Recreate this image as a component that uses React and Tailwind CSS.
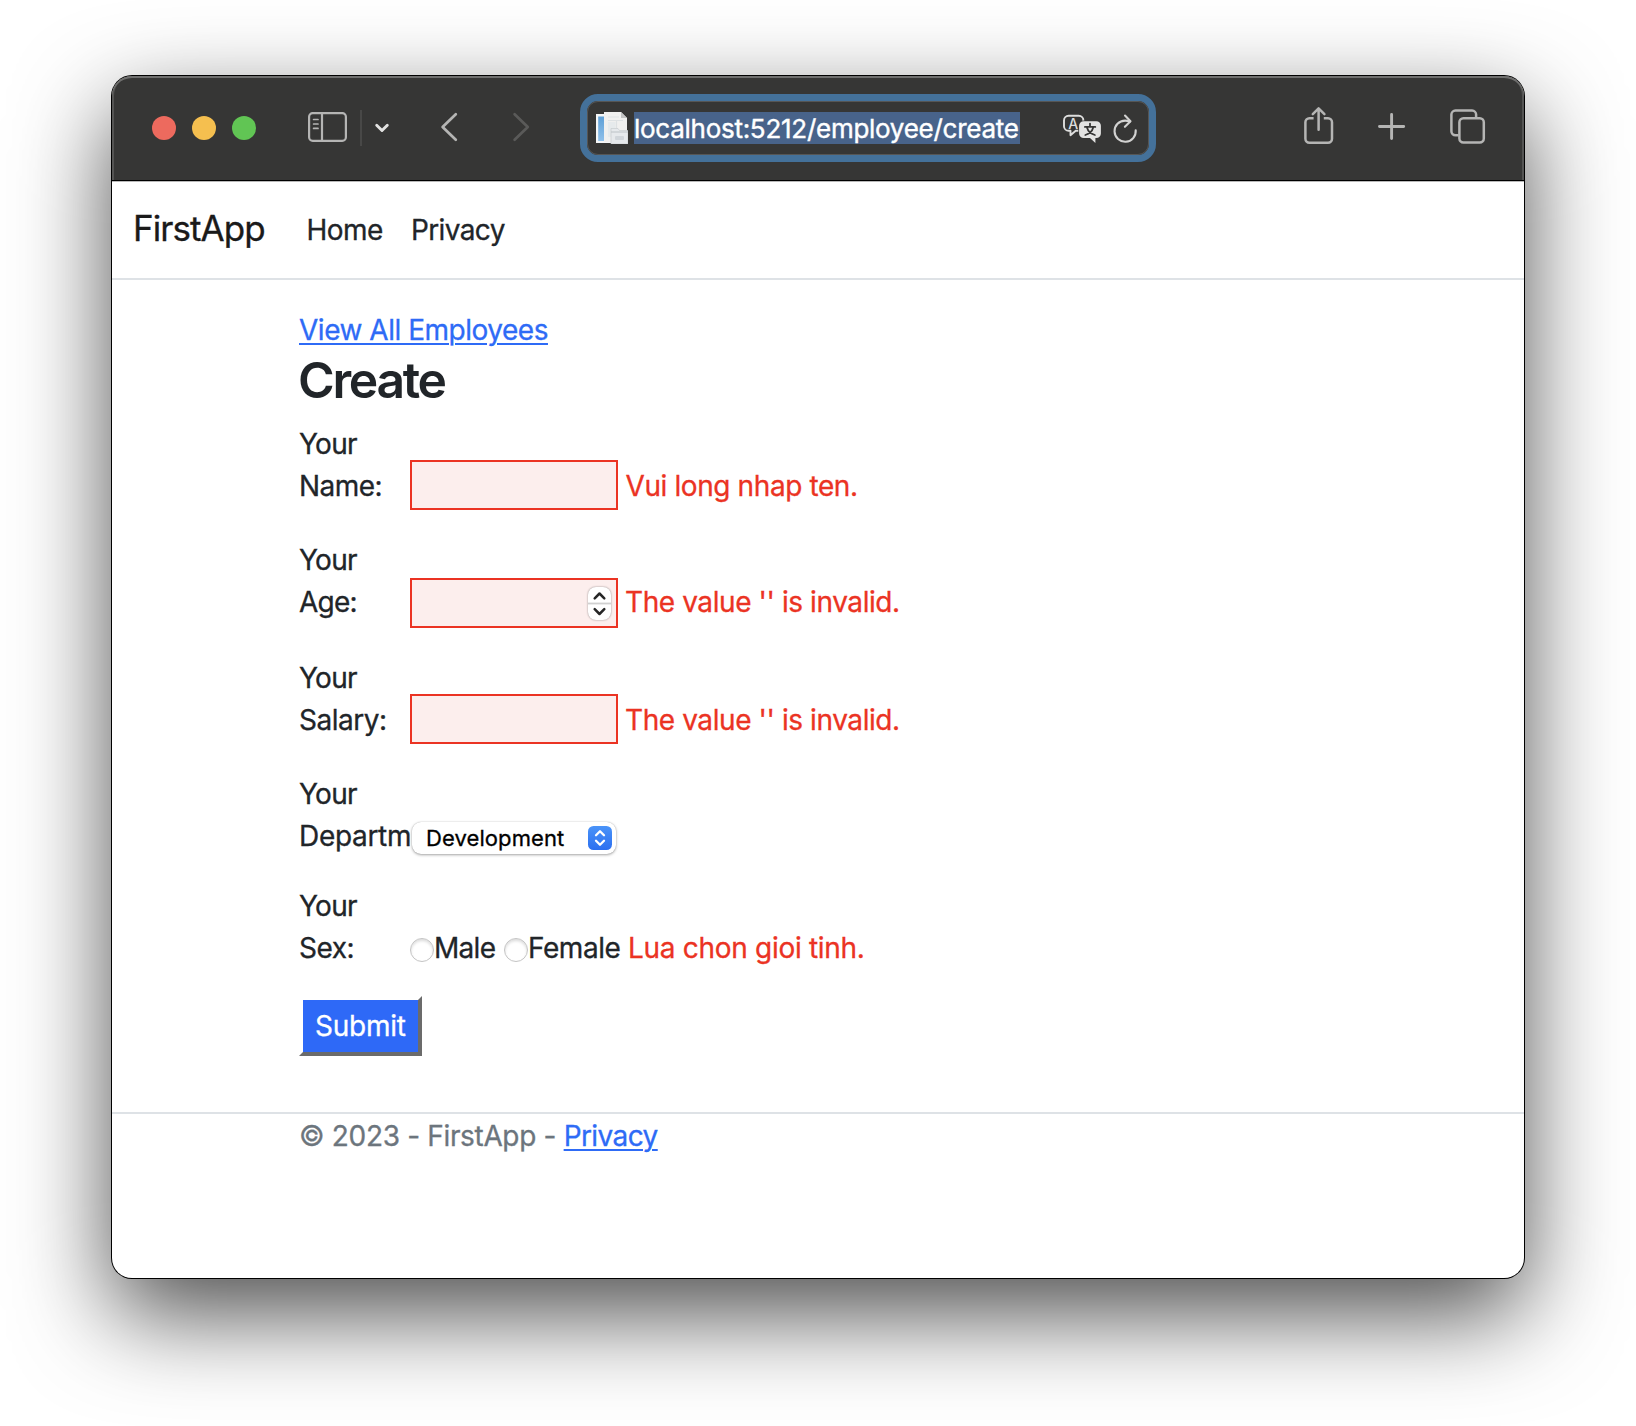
function SidebarIcon() {
  return (
    <svg className="ml-[50px] h-[52px] w-[44px]" viewBox="306 102 44 52" fill="none" stroke="#b5b5b4" strokeLinecap="round">
      <rect x="309.1" y="113.1" width="36.8" height="27.8" rx="3.6" strokeWidth="2.2" />
      <path d="M322 113v28" strokeWidth="2.2" strokeLinecap="butt" />
      <path d="M313.6 119.5h4.4M313.6 124h4.4M313.6 128.4h4.4" strokeWidth="1.7" />
    </svg>
  );
}

function ChevronDownIcon() {
  return (
    <svg className="ml-[10px] h-[52px] w-[20px]" viewBox="372 102 20 52" fill="none" stroke="#e2e2e1" strokeWidth="2.9" strokeLinecap="round" strokeLinejoin="round">
      <path d="M376.7 125.2l5.3 5.3 5.3-5.3" />
    </svg>
  );
}

function BackIcon() {
  return (
    <svg className="ml-[46px] h-[52px] w-[22px]" viewBox="438 102 22 52" fill="none" stroke="#b5b5b4" strokeWidth="2.7" strokeLinecap="round" strokeLinejoin="round">
      <path d="M455.8 114.2L442.6 127l13.2 12.8" />
    </svg>
  );
}

function ForwardIcon() {
  return (
    <svg className="ml-[50px] h-[52px] w-[22px]" viewBox="510 102 22 52" fill="none" stroke="#5a5a59" strokeWidth="2.7" strokeLinecap="round" strokeLinejoin="round">
      <path d="M514.6 114.2L527.8 127l-13.2 12.8" />
    </svg>
  );
}

function ShareIcon() {
  return (
    <svg className="ml-[144px] h-[52px] w-[37px]" viewBox="1300 102 37 52" fill="none" stroke="#b5b5b4" strokeWidth="2.5" strokeLinecap="round" strokeLinejoin="round">
      <path d="M1313.6 118.3h-4.2a4 4 0 0 0-4 4v16.5a4 4 0 0 0 4 4h18.6a4 4 0 0 0 4-4v-16.5a4 4 0 0 0-4-4h-4.2" strokeLinecap="butt" />
      <path d="M1318.6 129.7v-21M1312.8 114.2l5.8-5.8 5.8 5.8" />
    </svg>
  );
}

function PlusIcon() {
  return (
    <svg className="ml-[37px] h-[52px] w-[35px]" viewBox="1374 102 35 52" fill="none" stroke="#b5b5b4" strokeWidth="2.9" strokeLinecap="round">
      <path d="M1379.5 126.5h24.2M1391.6 114.4v24.2" />
    </svg>
  );
}

function TabsIcon() {
  return (
    <svg className="ml-[37px] h-[52px] w-[43px]" viewBox="1446 102 43 52" fill="none" stroke="#b5b5b4" strokeWidth="2.5">
      <path d="M1458.5 135.3h-3.1a4 4 0 0 1-4-4v-16.7a4 4 0 0 1 4-4h16.7a4 4 0 0 1 4 4v3.2" />
      <rect x="1459.4" y="118.2" width="24.4" height="24.4" rx="4" />
    </svg>
  );
}

function PagesIcon() {
  return (
    <svg className="ml-[6px] h-8 w-8" viewBox="0 0 32 32">
      <defs>
        <linearGradient id="pageBlue" x1="0" y1="0" x2="0" y2="1">
          <stop offset="0" stopColor="#5d9fd6" />
          <stop offset="1" stopColor="#8fc0ea" />
        </linearGradient>
      </defs>
      <rect x="0" y="2" width="16" height="29" fill="#f4f6f7" />
      <rect x="2.2" y="4.5" width="8" height="24.5" fill="url(#pageBlue)" />
      <path d="M8 0h17l6 6v24H8z" fill="#f0f0ef" />
      <path d="M25 0v6h6z" fill="#c3c4c4" />
      <path d="M12 5h11M12 8.5h15M20.5 8.5v8M12 17h8" stroke="#dde1e3" strokeWidth="1.2" fill="none" />
      <rect x="12" y="10" width="7.5" height="15" fill="#e6eaec" />
      <path d="M15 16.5h7l1.5 2H32V32H15z" fill="#e6e9ec" stroke="#c2c7cb" strokeWidth="0.6" />
      <path d="M15 20h17" stroke="#bcc2c6" strokeWidth="1" />
      <rect x="19" y="24" width="9" height="4" rx="1" fill="#d0d5da" />
    </svg>
  );
}

function TranslateIcon() {
  return (
    <svg className="mt-[1px] ml-[41px] h-8 w-[42px]" viewBox="1061 113 42 32">
      <path
        d="M1079 130.8h-3.3l-5.2 4.4v-4.4h-1.9a4.6 4.6 0 0 1-4.6-4.6v-5.8a4.6 4.6 0 0 1 4.6-4.6h10.2a4.6 4.6 0 0 1 4.6 4.6v1"
        fill="none"
        stroke="#dededd"
        strokeWidth="1.9"
        strokeLinejoin="round"
      />
      <text x="1073.3" y="128.6" textAnchor="middle" fontSize="14" fontWeight="500" fill="#dededd">A</text>
      <path
        d="M1083.7 121.2h12.6a4.6 4.6 0 0 1 4.6 4.6v7.6a4.6 4.6 0 0 1-4.6 4.6h-.9v5l-5.4-5h-6.3a4.6 4.6 0 0 1-4.6-4.6v-7.6a4.6 4.6 0 0 1 4.6-4.6z"
        fill="#e3e3e2"
        stroke="#363635"
        strokeWidth="1.6"
        paintOrder="stroke"
      />
      <path d="M1090 123.6v2.8M1084.9 126.9h10.4M1087 127.6c.9 3.4 3.6 6.2 7.9 7.4M1093.2 127.6c-.9 3.4-3.6 6.2-7.9 7.4" fill="none" stroke="#363635" strokeWidth="1.8" strokeLinecap="round" />
    </svg>
  );
}

function ReloadIcon() {
  return (
    <svg className="mt-[1px] ml-[9px] h-8 w-[28px]" viewBox="1112 113 28 32" fill="none" stroke="#d2d2d1" strokeWidth="2.1" strokeLinecap="round" strokeLinejoin="round">
      <path d="M1135.7 130.2a10.6 10.6 0 1 1-10.6-9.6c1.7 0 3.2.3 4.7.9" />
      <path d="M1125 115.5l5.5 5.7-5.6 5.6" />
    </svg>
  );
}

function Toolbar() {
  return (
    <div className="flex h-[104px] shrink-0 items-center rounded-t-[20px] bg-[#363635] shadow-[inset_0_2px_0_#6f6f6e,inset_2px_0_0_#545453,inset_-2px_0_0_#545453]">
      <div className="ml-[40px] flex gap-4">
        <span className="size-6 rounded-full bg-[#ed6a5e]" />
        <span className="size-6 rounded-full bg-[#f5bf4f]" />
        <span className="size-6 rounded-full bg-[#61c554]" />
      </div>
      <SidebarIcon />
      <span className="ml-[10px] h-9 w-[2px] bg-[#484847]" />
      <ChevronDownIcon />
      <BackIcon />
      <ForwardIcon />
      <div className="ml-[48px] flex h-[68px] w-[576px] items-center rounded-[18px] border-[7px] border-[#44719a] bg-[#363635]">
        <div className="flex h-full w-full items-center rounded-[11px] border border-[#565655] pl-[2px]">
          <PagesIcon />
          <span className="ml-[6px] h-8 w-[386px] shrink-0 bg-[#48638a] text-[26px] leading-[34px] tracking-[-0.27px] whitespace-nowrap text-white [-webkit-text-stroke:0.4px_#fff]">
            localhost:5212/employee/create
          </span>
          <TranslateIcon />
          <ReloadIcon />
        </div>
      </div>
      <ShareIcon />
      <PlusIcon />
      <TabsIcon />
    </div>
  );
}

function Stepper() {
  return (
    <span className="block h-[33px] w-[23px] rounded-[8px] bg-white shadow-[0_0_2px_rgba(0,0,0,0.45)]">
      <svg className="h-[33px] w-[23px]" viewBox="0 0 23 33" fill="none" stroke="#262626" strokeWidth="2.5" strokeLinecap="round" strokeLinejoin="round">
        <path d="M0 16.5h23" stroke="#d0d0d0" strokeWidth="1.8" strokeLinecap="butt" />
        <path d="M6.7 11.3l4.8-4.8 4.8 4.8M6.7 22.2l4.8 4.8 4.8-4.8" />
      </svg>
    </span>
  );
}

function Label({ second, spacing }) {
  return (
    <div className="w-[111px] shrink-0 whitespace-nowrap">
      <div className="tracking-[-0.75px]">Your</div>
      <div className={spacing}>{second}</div>
    </div>
  );
}

function Field({ children, offset }) {
  return (
    <div className={`flex h-[50px] w-[208px] items-center justify-end border-2 border-[#eb3323] bg-[#fceeed] pr-[5px] ${offset}`}>
      {children}
    </div>
  );
}

function ErrorText({ children, className }) {
  return <span className={`mt-[42px] whitespace-nowrap text-[#eb3323] ${className}`}>{children}</span>;
}

function Radio() {
  return (
    <span className="mt-[53px] block size-6 shrink-0 rounded-full border border-[#c4c4c4] bg-white shadow-[inset_0_2px_3px_rgba(0,0,0,0.14)]" />
  );
}

function DepartmentSelect() {
  return (
    <div className="mt-[49px] ml-[2px] flex h-8 w-[204px] items-center justify-between rounded-[9px] bg-white pr-1 pl-[14px] shadow-[0_0_1px_rgba(0,0,0,0.25),0_1px_3px_rgba(0,0,0,0.35)]">
      <span className="text-[22px] leading-8 tracking-[0.09px] text-black">Development</span>
      <span className="block size-6 rounded-[5.5px] bg-linear-to-b from-[#4a93f8] to-[#2c6ff0]">
        <svg className="size-6" viewBox="0 0 24 24" fill="none" stroke="#fff" strokeWidth="2.3" strokeLinecap="round" strokeLinejoin="round">
          <path d="M8 9.3l4-4 4 4M8 14.7l4 4 4-4" />
        </svg>
      </span>
    </div>
  );
}

export default function App() {
  return (
    <div className="h-[1426px] w-[1636px] overflow-hidden bg-white pt-[76px] pl-[112px] font-['Inter','Liberation_Sans',sans-serif]">
      <div className="flex h-[1202px] w-[1412px] flex-col rounded-[20px] bg-white shadow-[0_0_0_1px_#000,0_36px_96px_rgba(0,0,0,0.7)]">
        <Toolbar />
        <header className="flex h-[100px] shrink-0 border-t border-b-2 border-t-black border-b-[#dee2e6] pl-[21px] text-[28px] leading-[42px] text-[#212529] shadow-[inset_0_1px_0_#b9b9b9] [-webkit-text-stroke:0.3px]">
          <span className="mt-[21px] w-[173.5px] text-[35px] leading-[52px] tracking-[-0.95px] text-[#1a1a1a]">FirstApp</span>
          <span className="mt-[28px] w-[104.5px] tracking-[-0.55px]">Home</span>
          <span className="mt-[28px] tracking-[-0.62px]">Privacy</span>
        </header>

        <main className="h-[832px] shrink-0 pt-[29px] pl-[187px] text-[28px] leading-[42px] text-[#212529] [-webkit-text-stroke:0.3px]">
          <div className="h-[41px]">
            <a className="tracking-[-0.48px] text-[#2e6bf6] underline decoration-2 underline-offset-[3px]">View All Employees</a>
          </div>
          <h2 className="-ml-px h-[73px] text-[49.8px] leading-[60px] font-semibold tracking-[-2.3px] [-webkit-text-stroke:0px]">Create</h2>

          <div className="flex h-[116px]">
            <Label second="Name:" spacing="tracking-[-0.55px]" />
            <Field offset="mt-[37px]" />
            <ErrorText className="ml-[7.5px] tracking-[-0.4px]">Vui long nhap ten.</ErrorText>
          </div>
          <div className="flex h-[118px]">
            <Label second="Age:" spacing="tracking-[-0.8px]" />
            <Field offset="mt-[39px]">
              <Stepper />
            </Field>
            <ErrorText className="ml-[7px] tracking-[-0.42px]">The value '' is invalid.</ErrorText>
          </div>
          <div className="flex h-[116px]">
            <Label second="Salary:" spacing="tracking-[-0.5px]" />
            <Field offset="mt-[37px]" />
            <ErrorText className="ml-[7px] tracking-[-0.42px]">The value '' is invalid.</ErrorText>
          </div>
          <div className="flex h-[112px]">
            <Label second="Departm" spacing="tracking-[-0.32px]" />
            <DepartmentSelect />
          </div>
          <div className="flex h-[111px]">
            <Label second="Sex:" spacing="tracking-[-0.45px]" />
            <Radio />
            <span className="mt-[42px] w-[70px] tracking-[-0.7px]">Male</span>
            <Radio />
            <span className="mt-[42px] w-[100px] tracking-[-0.45px]">Female</span>
            <ErrorText className="tracking-[-0.3px]">Lua chon gioi tinh.</ErrorText>
          </div>
          <button className="block h-[60px] w-[123px] border-4 border-t-white border-r-[#6b6b6b] border-b-[#6b6b6b] border-l-white bg-[#2e69f7] bg-clip-padding pl-[12px] text-left leading-[52px] tracking-[-0.25px] text-white">
            Submit
          </button>
        </main>

        <footer className="border-t-2 border-[#dee2e6] pt-[1px] pl-[187px] text-[28px] leading-[42px] text-[#6c757d] [-webkit-text-stroke:0.3px]">
          <span className="tracking-[-0.33px]">© 2023 - FirstApp - </span>
          <a className="tracking-[-0.58px] text-[#2e6bf6] underline decoration-2 underline-offset-[3px]">Privacy</a>
        </footer>
      </div>
    </div>
  );
}
